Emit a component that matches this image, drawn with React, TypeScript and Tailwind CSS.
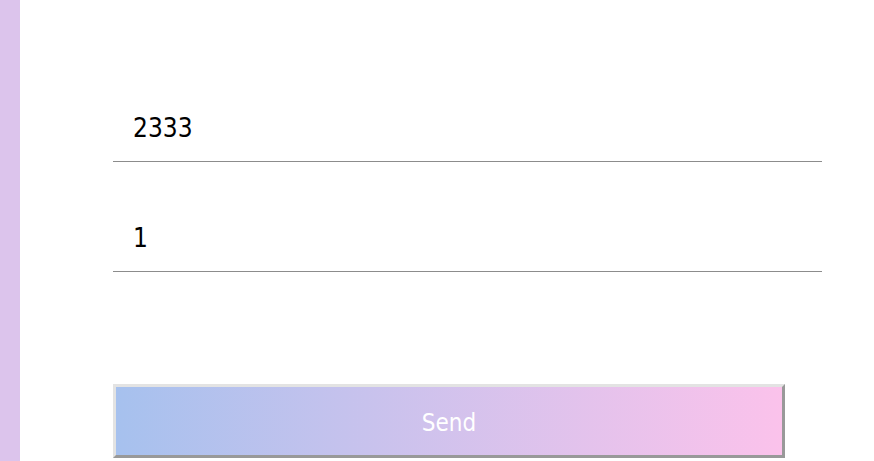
export default function App() {
  return (
    <div className="flex h-[461px] w-full overflow-hidden bg-white font-['DejaVu_Sans_Condensed','DejaVu_Sans',sans-serif]">
      {/* ── side bar ── */}
      <div className="w-5 shrink-0 bg-[#dcc4ec]" />

      {/* ── form ── */}
      <div className="flex flex-1 flex-col pl-[93px] pt-[100px]">
        <input
          defaultValue="2333"
          className="h-[62px] w-[709px] border-b border-[#8c8c8c] bg-transparent pb-[6px] pl-5 text-[26px] text-black outline-none"
        />
        <input
          defaultValue="1"
          className="mt-[48px] h-[62px] w-[709px] border-b border-[#8c8c8c] bg-transparent pb-[6px] pl-5 text-[26px] text-black outline-none"
        />
        <button className="mt-[112px] h-[74px] w-[672px] border-[3px] border-t-[#e3e3e3] border-l-[#e3e3e3] border-r-[#999999] border-b-[#999999] bg-gradient-to-r from-[#a6c1ee] to-[#fbc2eb] pt-1 text-[24px] text-white">
          Send
        </button>
      </div>
    </div>
  );
}
